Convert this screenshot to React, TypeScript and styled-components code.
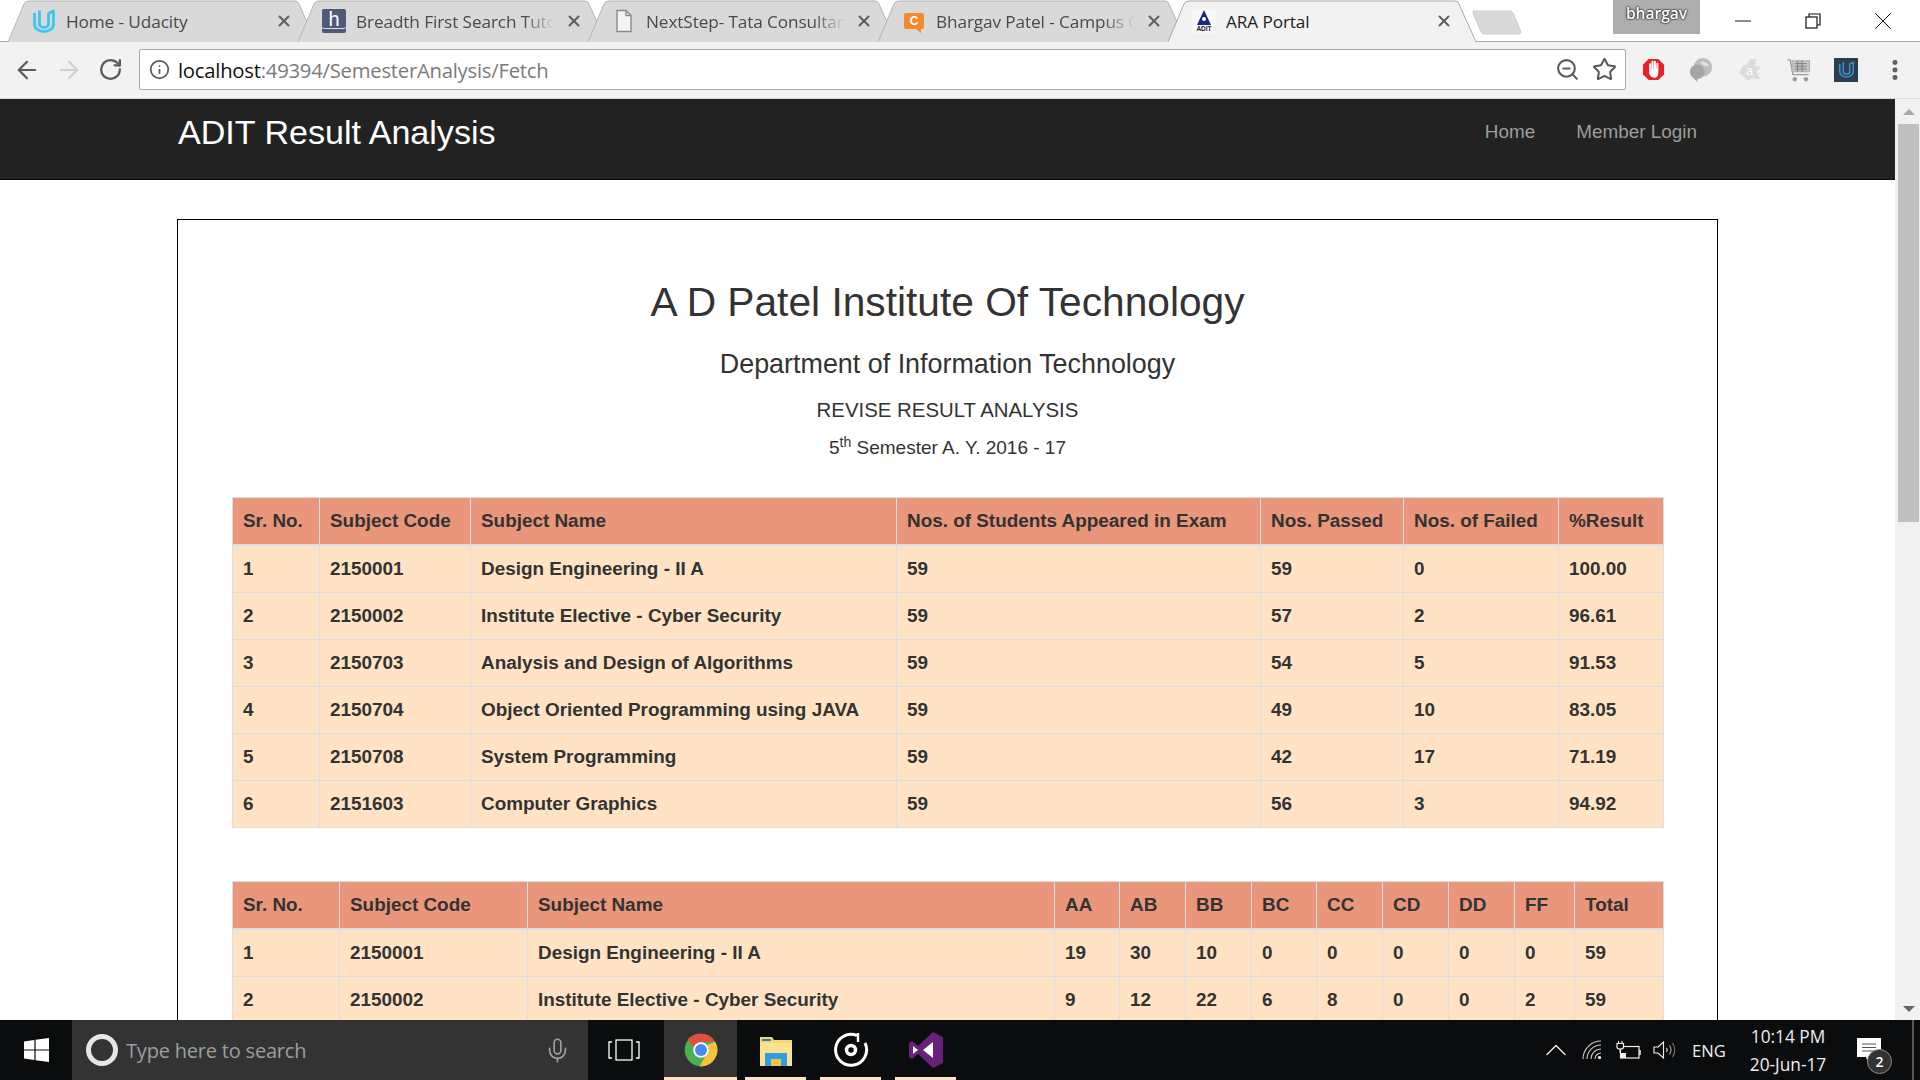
import React from "react";
import styled, { createGlobalStyle } from "styled-components";
import { ArrowLeft, ArrowRight, RotateCw, Info, ZoomOut, Star, X, Minus, Mic, ChevronUp, MoreVertical } from "lucide-react";

const Global = createGlobalStyle`
  html, body { margin: 0; padding: 0; height: 100%; overflow: hidden; background: #fff; }
  #root { height: 100%; }
  * { box-sizing: border-box; }
`;

const Shell = styled.div`
  display: flex; flex-direction: column; height: 1080px; width: 1920px; overflow: hidden;
  font-family: "Liberation Sans", Arial, sans-serif; color: #333;
`;

/* ---------- browser chrome ---------- */
const TabStrip = styled.div`
  display: flex; height: 42px; padding-left: 8px; background: #fff; position: relative;
  border-bottom: 1px solid #a8a8a8; flex: none;
`;
const Tab = styled.div<{ $active?: boolean }>`
  position: relative; width: 308px; height: 42px; margin-right: -18px; flex: none;
  display: flex; align-items: center; padding: 0 23px 0 24px; gap: 10px;
  z-index: ${(p) => (p.$active ? 2 : 1)};
  font-family: "Open Sans", sans-serif; font-size: 17.2px;
  color: ${(p) => (p.$active ? "#222" : "#4a4a4a")};
`;
const TabShape = styled.svg`
  position: absolute; left: 0; top: 0; z-index: -1;
`;
const TabLabel = styled.span<{ $fade?: boolean }>`
  flex: 1; min-width: 0; white-space: nowrap; letter-spacing: -0.1px;
  ${(p) => p.$fade && "mask-image: linear-gradient(to right, #000 84%, transparent 100%);"}
`;
const TabClose = styled.span`
  display: flex; color: #5f5f5f; flex: none;
`;
const Fav = styled.span`
  flex: none; width: 24px; height: 24px; display: flex; align-items: center; justify-content: center;
`;
const HackerFav = styled(Fav)`
  background: #4f5a7a; color: #fff; border-radius: 2px; font: 20px "Liberation Sans", sans-serif;
  padding-bottom: 3px; box-shadow: inset 0 -4px 0 #4f5a7a, inset 0 -5px 0 #d8dbe6;
`;
const CampusFav = styled(Fav)`
  position: relative; width: 20px; height: 16px; background: #f08a2c; color: #fff; border-radius: 2px;
  font: bold 12px "Liberation Sans", sans-serif; margin: 0 2px;
  &::after {
    content: ""; position: absolute; right: 3px; bottom: -4px; width: 0; height: 0;
    border-top: 4px solid #f08a2c; border-left: 5px solid transparent;
  }
`;
const NewTab = styled.div`
  width: 50px; height: 25px; align-self: flex-start; margin: 10px 0 0 14px; flex: none;
`;
const Profile = styled.div`
  position: absolute; left: 1613px; top: 0; width: 87px; height: 34px; background: #aeaeae;
  color: #fff; font: 600 15.5px "Open Sans", sans-serif; text-align: center; line-height: 26px;
  text-shadow: 0 0 2px #222, 0 0 2px #222, 0 0 1px #222;
`;
const WindowButtons = styled.div`
  position: absolute; right: 2px; top: 0; display: flex; height: 41px;
`;
const WinButton = styled.div`
  width: 70px; display: flex; align-items: center; justify-content: center; color: #111;
`;
const Toolbar = styled.div`
  height: 57px; flex: none; background: #f2f2f2; display: flex; align-items: center;
  padding-left: 13px; padding-bottom: 1px; border-bottom: 1px solid #dcdcdc;
`;
const NavBtn = styled.span<{ $off?: boolean }>`
  width: 42px; height: 28px; flex: none; display: flex; align-items: center; justify-content: flex-start;
  color: ${(p) => (p.$off ? "#d0d0d0" : "#5a5a5a")};
`;
const ReloadBtn = styled(NavBtn)`
  width: 42px; padding-left: 1px;
`;
const Omnibox = styled.div`
  width: 1487px; height: 41px; background: #fff; border: 1px solid #a9a9a9; border-radius: 2px;
  display: flex; align-items: center; padding: 0 8px 0 9px; color: #5a5a5a; flex: none;
`;
const Url = styled.div`
  flex: 1; margin-left: 8px; font: 20.3px "Open Sans", sans-serif; color: #7b7b7b; letter-spacing: -0.25px;
  b { font-weight: 400; color: #111; }
`;
const OmniIcons = styled.div`
  display: flex; gap: 12px; align-items: center;
`;
const Extensions = styled.div`
  display: flex; align-items: center; margin-left: 3px; flex: none;
`;
const Ext = styled.span`
  width: 48.3px; height: 30px; display: flex; align-items: center; justify-content: center; color: #5a5a5a;
`;

/* ---------- viewport ---------- */
const Viewport = styled.div`
  flex: 1; min-height: 0; display: flex;
`;
const Page = styled.div`
  flex: 1; min-width: 0; overflow: hidden; background: #fff;
`;
const NavBar = styled.nav`
  height: 81px; background: #222; border-bottom: 1px solid #080808; display: flex; align-items: flex-start;
  padding: 13px 198px 0 178px;
`;
const Brand = styled.div`
  flex: 1; color: #fff; font-size: 34.1px; line-height: 40px;
`;
const NavLinks = styled.div`
  display: flex; gap: 41px; color: #9d9d9d; font-size: 18.9px; line-height: 40px;
`;
const Report = styled.section`
  margin: 39px 0 0 177px; width: 1541px; border: 1px solid #000; padding: 0 54px 80px;
`;
const Title = styled.h1`
  margin: 60px 0 0; text-align: center; font-size: 40.7px; line-height: 44px; font-weight: 400;
`;
const Dept = styled.h2`
  margin: 25px 0 0; text-align: center; font-size: 26.9px; line-height: 30px; font-weight: 400;
`;
const Revise = styled.h3`
  margin: 18px 0 0; text-align: center; font-size: 20.4px; line-height: 26px; font-weight: 400;
`;
const Sem = styled.p`
  margin: 12px 0 0; text-align: center; font-size: 19px; line-height: 26px;
  sup { font-size: 14px; line-height: 0; }
`;
const Table = styled.table<{ $top: number }>`
  width: 1431px; margin-top: ${(p) => p.$top}px; border-collapse: collapse; table-layout: fixed;
  font-size: 18.9px; line-height: 26px; font-weight: 700; background: #ffe3c4;
`;
const Col = styled.col<{ $w: number }>`
  width: ${(p) => p.$w}px;
`;
const Th = styled.th`
  background: #e9967a; text-align: left; font-weight: 700; padding: 10px 10px; border: 1px solid #ddd; border-bottom-width: 2px;
`;
const Td = styled.td`
  padding: 10px 10px; border: 1px solid #ddd;
`;

/* ---------- scrollbar ---------- */
const Scrollbar = styled.div`
  width: 25px; flex: none; background: #f1f1f1; display: flex; flex-direction: column; align-items: center;
  padding: 0 0 0 2px;
`;
const ScrollArrow = styled.div<{ $down?: boolean }>`
  flex: none; width: 0; height: 0; border-left: 6px solid transparent; border-right: 6px solid transparent;
  ${(p) => (p.$down
    ? "border-top: 6px solid #666; margin-top: auto; margin-bottom: 8px;"
    : "border-bottom: 6px solid #a8a8a8; margin-top: 10px;")}
`;
const Thumb = styled.div`
  width: 21px; height: 398px; background: #c0c0c0; margin-top: 9px; flex: none;
`;

/* ---------- taskbar ---------- */
const Taskbar = styled.footer`
  height: 60px; flex: none; background: #0b0c0e; display: flex; color: #fff; font-family: "Open Sans", sans-serif;
`;
const Start = styled.div`
  width: 72px; display: flex; align-items: center; justify-content: center;
`;
const Search = styled.div`
  width: 516px; background: #333; display: flex; align-items: center; padding: 0 17px 0 14px; gap: 8px; color: #9a9fa3;
  font-size: 20px;
`;
const Cortana = styled.span`
  width: 32px; height: 32px; border: 5px solid #e6e6e6; border-radius: 50%; flex: none;
`;
const SearchText = styled.span`
  flex: 1; letter-spacing: -0.2px;
`;
const TaskView = styled.div`
  width: 76px; padding-right: 4px; display: flex; align-items: center; justify-content: center;
`;
const AppSlot = styled.div<{ $active?: boolean }>`
  width: ${(p) => (p.$active ? 73 : 61)}px; margin-right: 14px; padding-top: 3px;
  flex: none; display: flex; align-items: center; justify-content: center;
  background: ${(p) => (p.$active ? "#333" : "transparent")};
  border-bottom: 3px solid #fde2c4;
`;
const ChromeSlot = styled(AppSlot)`
  margin-right: 8px;
`;
const Tray = styled.div`
  margin-left: auto; display: flex; align-items: center; padding-right: 6px;
`;
const TrayIcon = styled.span`
  width: 36px; display: flex; align-items: center; justify-content: center; color: #eee;
`;
const Lang = styled.span`
  margin-left: 10px; width: 36px; font-size: 16.6px; color: #eee;
`;
const Clock = styled.div`
  width: 100px; margin-left: 10px; padding-top: 2px; text-align: center; font-size: 17.3px; line-height: 28px; color: #eee;
`;
const Notify = styled.div`
  position: relative; width: 45px; margin-left: 8px; height: 46px; display: flex; justify-content: center; padding-top: 11px;
`;
const NotifyBadge = styled.span`
  position: absolute; left: 21px; top: 22px; width: 25px; height: 25px; border-radius: 50%;
  background: #333; border: 1px solid #888; color: #fff; font-size: 14px; font-weight: 600;
  display: flex; align-items: center; justify-content: center;
`;
const Desktop = styled.span`
  width: 2px; height: 60px; background: #555; margin-left: 21px;
`;

/* ---------- drawings ---------- */
const UdacityMark = ({ c = "#3cc6f0", s = 24, w = 2.8 }: { c?: string; s?: number; w?: number }) => (
  <svg width={s} height={s} viewBox="0 0 24 24" fill="none" stroke={c} strokeWidth={w}>
    <path d="M2.5 4 L2.5 15 C2.5 20 7.5 22.5 12 22.5 C16.5 22.5 21.5 20 21.5 15 L21.5 1.8 L16.5 4.5 V15 C16.5 17 14.5 18.5 12 18.5 C9.5 18.5 7.5 17 7.5 15 V1.5" strokeLinejoin="round" />
  </svg>
);
const AditMark = () => (
  <svg width="24" height="24" viewBox="0 0 24 24">
    <rect width="24" height="24" fill="#f7f7f7" />
    <path d="M12 1 L19 16 H5 Z" fill="#1a2a78" />
    <circle cx="12" cy="10" r="2" fill="#fff" />
    <text x="12" y="22" fontSize="6.5" fontWeight="700" textAnchor="middle" fontFamily="Liberation Sans" fill="#222">ADIT</text>
  </svg>
);
const DocMark = () => (
  <svg width="18" height="24" viewBox="0 0 18 24" fill="#f4f4f4" stroke="#8a8a8a" strokeWidth="1.4">
    <path d="M2 1.5 H11 L16 6.5 V22.5 H2 Z" />
    <path d="M11 1.5 V6.5 H16" fill="none" />
  </svg>
);
const TabBg = ({ active }: { active?: boolean }) => (
  <TabShape width="308" height="43" viewBox="0 0 308 43">
    <path
      d="M0 42 L16 4 Q17 1 21 1 H287 Q290 1 291 4 L308 42"
      fill={active ? "#f2f2f2" : "#d9d9d9"}
      stroke={active ? "#a8a8a8" : "#b5b5b5"}
      strokeWidth="1"
    />
  </TabShape>
);
const Windows = () => (
  <svg width="25" height="24" viewBox="0 0 25 24" fill="#fff">
    <path d="M0 3.4 L10.4 2 V11.4 H0 Z M11.6 1.8 L25 0 V11.4 H11.6 Z M0 12.6 H10.4 V22 L0 20.6 Z M11.6 12.6 H25 V24 L11.6 22.2 Z" />
  </svg>
);
const ChromeLogo = () => (
  <svg width="34" height="34" viewBox="0 0 48 48">
    <circle cx="24" cy="24" r="23" fill="#4caf50" />
    <path d="M24 1 A23 23 0 0 1 44 12.5 L24 13 A11 11 0 0 0 13.5 20.5 L5 9 A23 23 0 0 1 24 1 Z" fill="#e0503f" />
    <path d="M44 12.5 A23 23 0 0 1 22 47 L33 28 A11 11 0 0 0 33 17 Z" fill="#f6c33a" />
    <circle cx="24" cy="24" r="11" fill="#fff" />
    <circle cx="24" cy="24" r="8.5" fill="#4a88ee" />
  </svg>
);
const FolderLogo = () => (
  <svg width="32" height="32" viewBox="0 0 32 32">
    <path d="M0 3 H12 L14 6 H32 V32 H0 Z" fill="#f7d774" />
    <rect x="0" y="9" width="32" height="23" fill="#fbe391" />
    <rect x="2" y="5" width="9" height="2" fill="#2e7fc1" />
    <path d="M5 32 V19 H27 V32 H21 V25 H11 V32 Z" fill="#2f9fe0" />
    <rect x="11" y="25" width="10" height="7" fill="#f3c64a" />
  </svg>
);
const GrooveLogo = () => (
  <svg width="36" height="36" viewBox="0 0 36 36" fill="none" stroke="#fff">
    <path d="M24 3.5 A15.5 15.5 0 1 0 32 11" strokeWidth="3" />
    <path d="M25 1 L25 10" strokeWidth="2.4" />
    <circle cx="18" cy="18" r="4.5" strokeWidth="3.5" />
  </svg>
);
const VsLogo = () => (
  <svg width="34" height="36" viewBox="0 0 34 36">
    <path d="M24 0 L34 5 V31 L24 36 L9 22 L3 27 L0 25 V11 L3 9 L9 14 Z" fill="#68217a" />
    <path d="M24 10 V26 L14 18 Z M4 14 L9 18 L4 22 Z" fill="#fff" />
  </svg>
);
const AdBlock = () => (
  <svg width="23" height="23" viewBox="0 0 24 24">
    <path d="M7 1 H17 L23 7 V17 L17 23 H7 L1 17 V7 Z" fill="#e8202a" />
    <path d="M8.5 12 V6.5 M11 11 V4 M13.5 11 V4 M16 12 V6" stroke="#fff" strokeWidth="2.1" fill="none" strokeLinecap="round" />
    <path d="M7.5 11 H17 V15 Q17 20.5 12.5 20.5 Q9 20.5 7.5 16 Z" fill="#fff" />
  </svg>
);
const GlobeExt = () => (
  <svg width="24" height="24" viewBox="0 0 26 26">
    <circle cx="15" cy="10" r="10" fill="#bdbdbd" />
    <circle cx="9" cy="15" r="8" fill="#a5a5a5" />
    <path d="M12 4 Q18 3 22 8 Q16 10 12 4 Z" fill="#e3e3e3" />
    <path d="M4 21 L9 22 L9 26 Z" fill="#a5a5a5" />
  </svg>
);
const AvastExt = () => (
  <svg width="24" height="24" viewBox="0 0 26 26">
    <path d="M20 1 L18 8 L25 10 L20 15 L24 23 L16 22 L10 25 L6 20 L1 16 L5 9 L11 6 L13 1 Z" fill="#dcdcdc" />
    <text x="12.5" y="18" fontSize="13" fontFamily="Liberation Sans" fill="#fff" textAnchor="middle">a</text>
  </svg>
);
const CartExt = () => (
  <svg width="25" height="24" viewBox="0 0 26 26" fill="none" stroke="#9a9a9a">
    <path d="M1 2 H4 L7 18 H24" strokeWidth="1.4" />
    <rect x="6" y="3" width="19" height="12" fill="#c4c4c4" stroke="#aaa" />
    <path d="M9 6 H22 M9 9 H22 M9 12 H22 M12 3 V15 M17 3 V15" stroke="#7d7d7d" strokeWidth="1" />
    <circle cx="9" cy="23" r="2" fill="#9a9a9a" />
    <circle cx="21" cy="23" r="2" fill="#9a9a9a" />
  </svg>
);
const UdacityExt = styled.span`
  width: 24px; height: 24px; background: #2e3d4d; display: flex; align-items: center; justify-content: center;
`;
const Restore = () => (
  <svg width="16" height="16" viewBox="0 0 16 16" fill="none" stroke="#111" strokeWidth="1.2">
    <rect x="1" y="4" width="11" height="11" fill="#fff" />
    <path d="M4 4 V1 H15 V12 H12" />
  </svg>
);
const TaskViewIcon = () => (
  <svg width="32" height="22" viewBox="0 0 32 22" fill="none" stroke="#fff" strokeWidth="1.3">
    <rect x="8" y="1" width="16" height="20" />
    <path d="M4 3 H1 V19 H4 M28 3 H31 V19 H28" />
  </svg>
);
const BatteryPlug = () => (
  <svg width="25" height="18" viewBox="0 0 25 18" fill="none" stroke="#eee" strokeWidth="1.2">
    <rect x="4.5" y="5.5" width="18.5" height="11.5" />
    <path d="M24 9 V14" strokeWidth="1.5" />
    <path d="M1 2.5 H7.5 V6 Q7.5 8 4.2 8 Q1 8 1 6 Z M2.5 0 V2.5 M6 0 V2.5 M4.2 8 V12" fill="#0b0c0e" />
    <path d="M5 12 L10 12 V17 H5 Z" fill="#eee" stroke="none" />
  </svg>
);
const SpeakerIcon = () => (
  <svg width="23" height="18" viewBox="0 0 23 18" fill="none" stroke="#eee" strokeWidth="1.1">
    <path d="M1 6 H5 L10.5 1 V17 L5 12 H1 Z" />
    <path d="M13.5 7 Q15 9 13.5 11" />
    <path d="M16.5 4.5 Q19.5 9 16.5 13.5" stroke="#aaa" />
    <path d="M19.5 2 Q24 9 19.5 16" stroke="#777" />
  </svg>
);
const Speech = () => (
  <svg width="24" height="25" viewBox="0 0 24 25" fill="#fff">
    <path d="M0 0 H24 V19 H16 L11 25 L9 19 H0 Z" />
    <path d="M5 6 H19 M5 9.5 H19 M5 13 H19" stroke="#555" strokeWidth="1.2" />
  </svg>
);
const WifiArcs = () => (
  <svg width="20" height="20" viewBox="0 0 20 20" fill="none" stroke="#ccc" strokeWidth="1.1">
    <path d="M1 19 A18 18 0 0 1 19 1" />
    <path d="M5 19 A14 14 0 0 1 19 5" />
    <path d="M9 19 A10 10 0 0 1 19 9" />
    <path d="M13 19 A6 6 0 0 1 19 13" />
    <circle cx="17.5" cy="17.5" r="1.6" fill="#fff" stroke="none" />
  </svg>
);

/* ---------- data ---------- */
const subjects = [
  ["1", "2150001", "Design Engineering - II A", "59", "59", "0", "100.00"],
  ["2", "2150002", "Institute Elective - Cyber Security", "59", "57", "2", "96.61"],
  ["3", "2150703", "Analysis and Design of Algorithms", "59", "54", "5", "91.53"],
  ["4", "2150704", "Object Oriented Programming using JAVA", "59", "49", "10", "83.05"],
  ["5", "2150708", "System Programming", "59", "42", "17", "71.19"],
  ["6", "2151603", "Computer Graphics", "59", "56", "3", "94.92"],
];
const summaryHead = ["Sr. No.", "Subject Code", "Subject Name", "Nos. of Students Appeared in Exam", "Nos. Passed", "Nos. of Failed", "%Result"];
const summaryCols = [87, 151, 426, 364, 143, 155, 105];
const gradeHead = ["Sr. No.", "Subject Code", "Subject Name", "AA", "AB", "BB", "BC", "CC", "CD", "DD", "FF", "Total"];
const gradeCols = [107, 188, 527, 65, 66, 66, 65, 66, 66, 66, 60, 89];
const grades = [
  ["1", "2150001", "Design Engineering - II A", "19", "30", "10", "0", "0", "0", "0", "0", "59"],
  ["2", "2150002", "Institute Elective - Cyber Security", "9", "12", "22", "6", "8", "0", "0", "2", "59"],
];

const DataTable = ({ top, cols, head, rows }: { top: number; cols: number[]; head: string[]; rows: string[][] }) => (
  <Table $top={top}>
    <colgroup>{cols.map((w, i) => <Col key={i} $w={w} />)}</colgroup>
    <thead><tr>{head.map((h) => <Th key={h}>{h}</Th>)}</tr></thead>
    <tbody>
      {rows.map((r) => <tr key={r[0]}>{r.map((c, i) => <Td key={i}>{c}</Td>)}</tr>)}
    </tbody>
  </Table>
);

const tabs = [
  { label: "Home - Udacity", icon: <Fav><UdacityMark /></Fav> },
  { label: "Breadth First Search Tuto", fade: true, icon: <HackerFav>h</HackerFav> },
  { label: "NextStep- Tata Consultan", fade: true, icon: <Fav><DocMark /></Fav> },
  { label: "Bhargav Patel - Campus C", fade: true, icon: <CampusFav>C</CampusFav> },
  { label: "ARA Portal", active: true, icon: <Fav><AditMark /></Fav> },
];

export default function App() {
  return (
    <Shell>
      <Global />
      <TabStrip>
        {tabs.map((t) => (
          <Tab key={t.label} $active={t.active}>
            <TabBg active={t.active} />
            {t.icon}
            <TabLabel $fade={t.fade}>{t.label}</TabLabel>
            <TabClose><X size={18} strokeWidth={2.7} /></TabClose>
          </Tab>
        ))}
        <NewTab>
          <svg width="50" height="25" viewBox="0 0 50 25">
            <path d="M1 1 H38 Q40 1 41 3 L49 22 Q49 24 47 24 H12 Q10 24 9 22 L1 3 Q0.5 1 2 1 Z" fill="#d9d9d9" stroke="#cfcfcf" />
          </svg>
        </NewTab>
        <Profile>bhargav</Profile>
        <WindowButtons>
          <WinButton><Minus size={26} strokeWidth={0.9} /></WinButton>
          <WinButton><Restore /></WinButton>
          <WinButton><X size={30} strokeWidth={0.8} /></WinButton>
        </WindowButtons>
      </TabStrip>
      <Toolbar>
        <NavBtn><ArrowLeft size={28} strokeWidth={1.9} /></NavBtn>
        <NavBtn $off><ArrowRight size={28} strokeWidth={1.9} /></NavBtn>
        <ReloadBtn><RotateCw size={25} strokeWidth={2.2} /></ReloadBtn>
        <Omnibox>
          <Info size={21} strokeWidth={2} />
          <Url><b>localhost</b>:49394/SemesterAnalysis/Fetch</Url>
          <OmniIcons>
            <ZoomOut size={25} strokeWidth={2} />
            <Star size={25} strokeWidth={2} />
          </OmniIcons>
        </Omnibox>
        <Extensions>
          <Ext><AdBlock /></Ext>
          <Ext><GlobeExt /></Ext>
          <Ext><AvastExt /></Ext>
          <Ext><CartExt /></Ext>
          <Ext><UdacityExt><UdacityMark c="#3a8fc8" s={17} w={2.2} /></UdacityExt></Ext>
          <Ext><MoreVertical size={26} strokeWidth={2.6} /></Ext>
        </Extensions>
      </Toolbar>
      <Viewport>
        <Page>
          <NavBar>
            <Brand>ADIT Result Analysis</Brand>
            <NavLinks><span>Home</span><span>Member Login</span></NavLinks>
          </NavBar>
          <Report>
            <Title>A D Patel Institute Of Technology</Title>
            <Dept>Department of Information Technology</Dept>
            <Revise>REVISE RESULT ANALYSIS</Revise>
            <Sem>5<sup>th</sup> Semester A. Y. 2016 - 17</Sem>
            <DataTable top={36} cols={summaryCols} head={summaryHead} rows={subjects} />
            <DataTable top={53} cols={gradeCols} head={gradeHead} rows={grades} />
          </Report>
        </Page>
        <Scrollbar>
          <ScrollArrow />
          <Thumb />
          <ScrollArrow $down />
        </Scrollbar>
      </Viewport>
      <Taskbar>
        <Start><Windows /></Start>
        <Search>
          <Cortana />
          <SearchText>Type here to search</SearchText>
          <Mic size={27} strokeWidth={1.5} />
        </Search>
        <TaskView><TaskViewIcon /></TaskView>
        <ChromeSlot $active><ChromeLogo /></ChromeSlot>
        <AppSlot><FolderLogo /></AppSlot>
        <AppSlot><GrooveLogo /></AppSlot>
        <AppSlot><VsLogo /></AppSlot>
        <Tray>
          <TrayIcon><ChevronUp size={36} strokeWidth={0.9} /></TrayIcon>
          <TrayIcon><WifiArcs /></TrayIcon>
          <TrayIcon><BatteryPlug /></TrayIcon>
          <TrayIcon><SpeakerIcon /></TrayIcon>
          <Lang>ENG</Lang>
          <Clock>10:14 PM<br />20-Jun-17</Clock>
          <Notify><Speech /><NotifyBadge>2</NotifyBadge></Notify>
          <Desktop />
        </Tray>
      </Taskbar>
    </Shell>
  );
}
